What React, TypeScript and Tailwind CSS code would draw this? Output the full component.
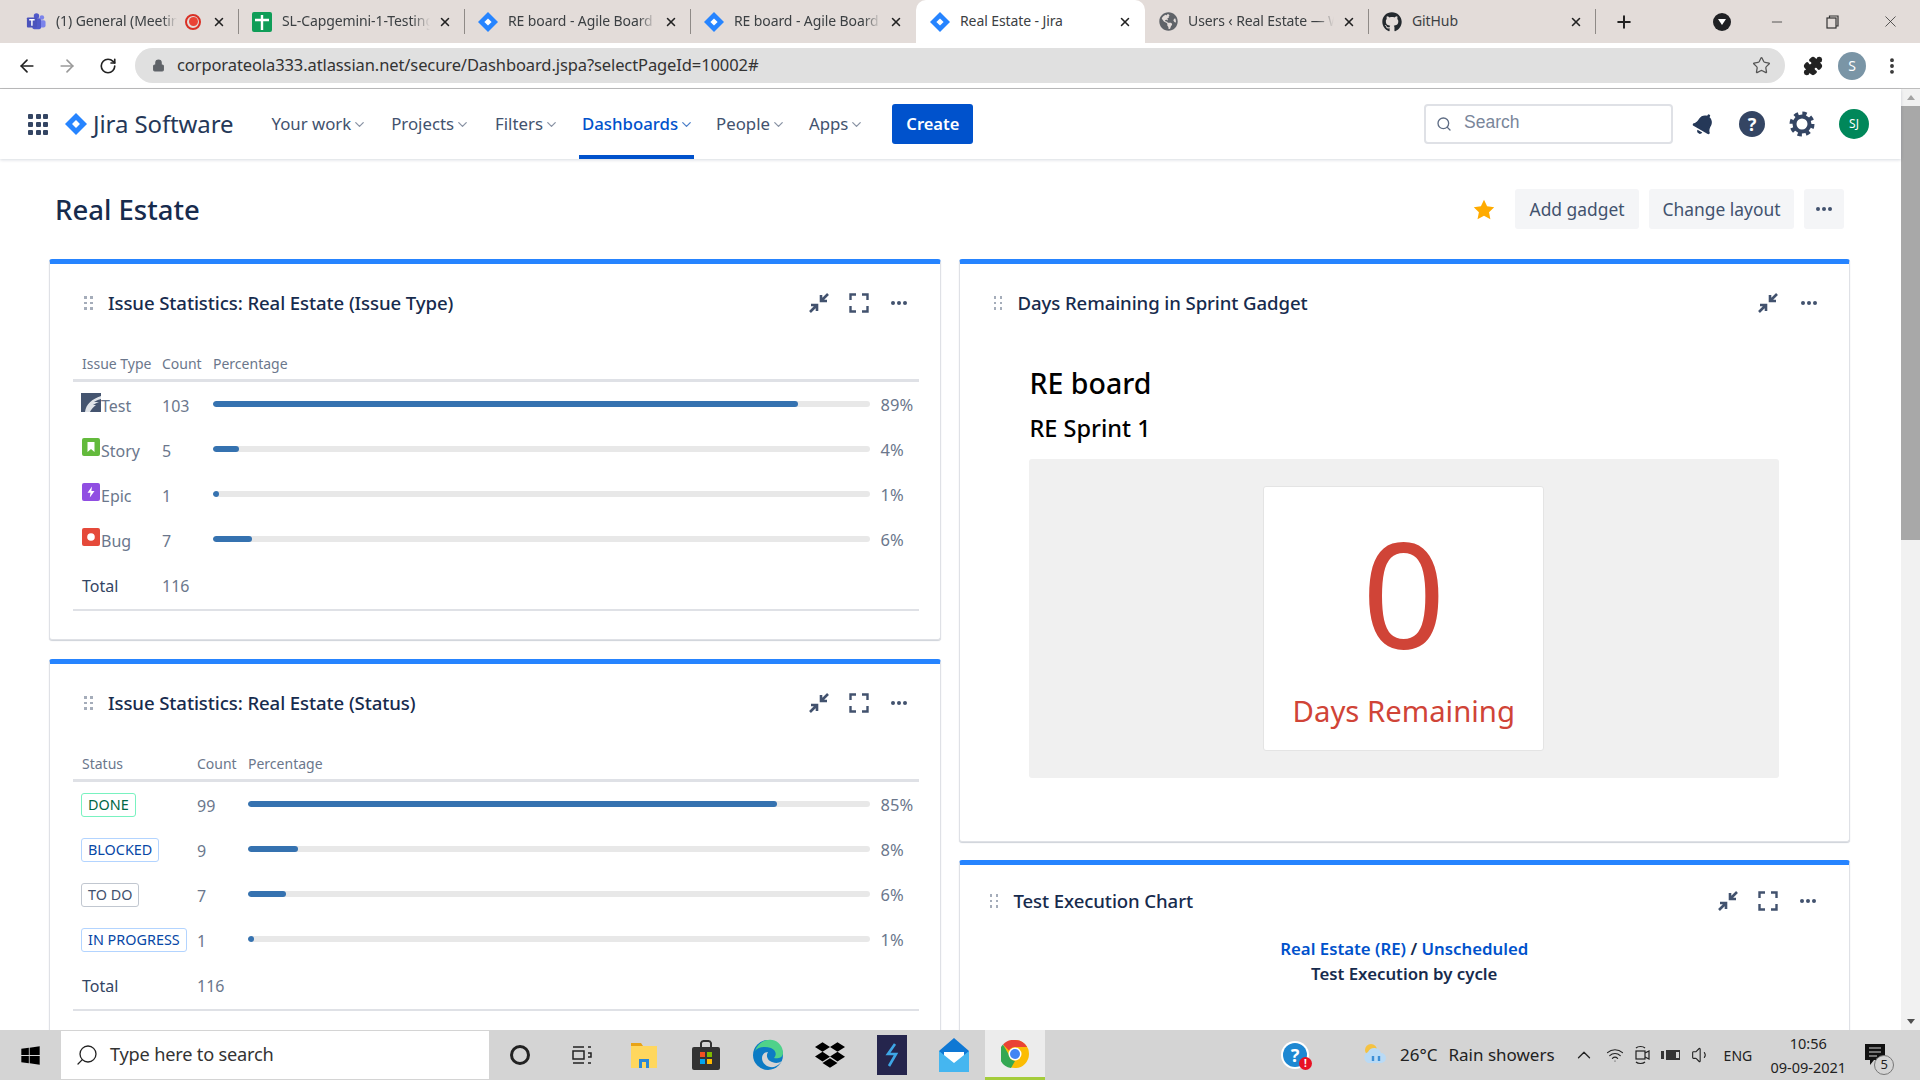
import { ArrowLeft, ArrowRight, RotateCw, Lock, Star, Puzzle, X, Plus, Minus, Search, ChevronDown, ChevronUp, Wifi, Volume1, MoreVertical } from 'lucide-react'
import { FaGithub, FaGlobeAmericas, FaBell, FaWindows, FaDropbox } from 'react-icons/fa'
import type { ReactNode } from 'react'

function JiraDiamond({ size = 20 }: { size?: number }) {
  return (
    <svg width={size} height={size} viewBox="0 0 20 20">
      <path d="M10 0 L20 10 L10 20 L0 10 Z" fill="#2684ff" />
      <path d="M10 6.4 L13.6 10 L10 13.6 L6.4 10 Z" fill="#fff" />
    </svg>
  )
}

function TeamsIcon() {
  return (
    <svg width="22" height="20" viewBox="0 0 22 20">
      <circle cx="17.5" cy="5" r="2.5" fill="#7b83eb" />
      <rect x="13" y="8" width="8.5" height="8" rx="2" fill="#7b83eb" />
      <circle cx="11.5" cy="3.5" r="3" fill="#5059c9" />
      <rect x="7" y="6" width="9.5" height="12" rx="2" fill="#5059c9" />
      <rect x="1" y="5" width="11" height="11" rx="1" fill="#4b53bc" />
      <path d="M3.5 7.5h6M6.5 7.5v6.5" stroke="#fff" strokeWidth="1.6" />
    </svg>
  )
}

function SheetsIcon() {
  return (
    <svg width="20" height="20" viewBox="0 0 20 20">
      <rect width="20" height="20" rx="2" fill="#0f9d58" />
      <path d="M3 8h14M10 3v15" stroke="#fff" strokeWidth="2.4" />
    </svg>
  )
}

function CloseX() {
  return <X size={14} strokeWidth={2.6} className="text-[#222] shrink-0" />
}

const TABS: { title: string; icon: ReactNode; width: string; extra?: ReactNode; active?: boolean; fade?: boolean }[] = [
  { title: '(1) General (Meeting)', fade: true, icon: <TeamsIcon />, width: 'w-[226px]', extra: <span className="w-[16px] h-[16px] rounded-full border-2 border-[#d93025] flex items-center justify-center mr-[11px] shrink-0"><span className="w-[9px] h-[9px] rounded-full bg-[#ea4335]" /></span> },
  { title: 'SL-Capgemini-1-Testing', fade: true, icon: <SheetsIcon />, width: 'w-[226px]' },
  { title: 'RE board - Agile Board', fade: true, icon: <JiraDiamond />, width: 'w-[226px]' },
  { title: 'RE board - Agile Board', fade: true, icon: <JiraDiamond />, width: 'w-[225px]' },
  { title: 'Real Estate - Jira', icon: <JiraDiamond />, width: 'w-[229px]', active: true },
  { title: 'Users ‹ Real Estate — WordPress', fade: true, icon: <FaGlobeAmericas size={19} className="text-[#5f6368]" />, width: 'w-[224px]' },
  { title: 'GitHub', icon: <FaGithub size={20} className="text-[#24292e]" />, width: 'w-[227px]' },
]

function ChromeTabs() {
  return (
    <div className="h-[43px] bg-[#e3dcd9] flex items-end pl-[13px] shrink-0">
      {TABS.map((t, i) =>
        <div
          key={i}
          className={t.active
            ? `${t.width} h-[43px] bg-white rounded-t-[10px] flex items-center pl-[14px] pr-[13px] shrink-0`
            : `${t.width} h-[43px] flex items-center pl-[13px] pr-[13px] shrink-0 relative`}
        >
          <span className="w-[20px] flex justify-center shrink-0">{t.icon}</span>
          <span className={t.fade
            ? 'flex-1 ml-[10px] mr-[8px] -mt-[2px] overflow-hidden whitespace-nowrap text-[14px] text-[#3c4043] tracking-[-0.1px] [mask-image:linear-gradient(to_right,black_88%,transparent)]'
            : 'flex-1 ml-[10px] mr-[8px] -mt-[2px] overflow-hidden whitespace-nowrap text-[14px] text-[#3c4043] tracking-[-0.1px]'}>{t.title}</span>
          {t.extra}
          <CloseX />
          {!t.active && i !== 3 && <span className="absolute right-0 top-[9px] h-[25px] w-px bg-[#8f8a87]" />}
        </div>
      )}
      <div className="h-[43px] flex items-center ml-[18px]">
        <Plus size={20} strokeWidth={2.4} className="text-[#222]" />
      </div>
      <div className="h-[43px] flex items-center ml-[79px]">
        <span className="w-[18px] h-[18px] rounded-full bg-[#202124] flex items-center justify-center">
          <span className="w-0 h-0 border-l-[4px] border-r-[4px] border-t-[6px] border-l-transparent border-r-transparent border-t-white" />
        </span>
      </div>
      <div className="h-[43px] flex items-center ml-[38px] text-[#333]">
        <Minus size={16} strokeWidth={1.2} />
        <svg width="13" height="14" viewBox="0 0 13 14" className="ml-[41px]" fill="none" stroke="#333" strokeWidth="1.2">
          <rect x="1" y="3" width="9" height="10" />
          <path d="M3.5 3V1h8.5v10h-2" />
        </svg>
        <X size={19} strokeWidth={1} className="ml-[42px]" />
      </div>
    </div>
  )
}

function AddressBar() {
  return (
    <div className="h-[46px] bg-white border-b border-[#bdbdbd] flex items-center shrink-0">
      <ArrowLeft size={20} strokeWidth={2} className="ml-[17px] text-[#222]" />
      <ArrowRight size={20} strokeWidth={2} className="ml-[20px] text-[#9a9a9a]" />
      <RotateCw size={18} strokeWidth={2.2} className="ml-[22px] text-[#222]" />
      <div className="ml-[18px] w-[1650px] h-[35px] rounded-full bg-[#e0e0e0] flex items-center pl-[17px] pr-[14px] -mt-px">
        <Lock size={13} fill="#5f6368" className="text-[#5f6368]" />
        <span className="ml-[12px] text-[16.5px] text-[#333] tracking-[-0.1px] flex-1">corporateola333.atlassian.net/secure/Dashboard.jspa?selectPageId=10002#</span>
        <Star size={19} strokeWidth={1.6} className="text-[#555]" />
      </div>
      <Puzzle size={20} fill="#222" className="ml-[18px] text-[#222]" />
      <span className="ml-[15px] w-[28px] h-[28px] rounded-full bg-[#7a95a6] text-white text-[14px] flex items-center justify-center">S</span>
      <MoreVertical size={20} strokeWidth={2.6} className="ml-[16px] text-[#333]" />
    </div>
  )
}

const NAV_ITEMS = [
  { label: 'Your work', ml: 'ml-[38px]' },
  { label: 'Projects', ml: 'ml-[24px]' },
  { label: 'Filters', ml: 'ml-[25px]' },
  { label: 'Dashboards', ml: 'ml-[23px]', active: true },
  { label: 'People', ml: 'ml-[22px]' },
  { label: 'Apps', ml: 'ml-[23px]' },
]

function JiraNav() {
  return (
    <nav className="h-[70px] bg-white shadow-[0_1px_3px_rgba(9,30,66,0.16)] flex items-center pl-[28px] pr-[32px] relative shrink-0">
      <div className="grid grid-cols-3 gap-[3px] w-[20px]">
        {Array.from({ length: 9 }).map((_, i) => <span key={i} className="w-[5px] h-[5px] bg-[#344563] rounded-[1px]" />)}
      </div>
      <span className="ml-[17px]"><JiraDiamond size={22} /></span>
      <span className="ml-[6px] text-[24px] text-[#253858] tracking-[-0.1px]">Jira Software</span>
      {NAV_ITEMS.map(n =>
        <div key={n.label} className={`${n.ml} h-[70px] flex items-center relative`}>
          <span className={n.active ? 'text-[16.8px] font-medium text-[#0052cc]' : 'text-[16.8px] text-[#42526e]'}>{n.label}</span>
          <ChevronDown size={15} strokeWidth={2} className={n.active ? 'text-[#4c7fc9] ml-[1px]' : 'text-[#8993a4] ml-[1px]'} />
          {n.active && <span className="absolute left-[-3px] right-0 bottom-0 h-[4px] bg-[#0052cc]" />}
        </div>
      )}
      <button className="ml-[28px] w-[81px] h-[40px] bg-[#0052cc] rounded-[3px] text-white text-[16.5px] font-semibold">Create</button>
      <div className="ml-auto w-[249px] h-[40px] border-2 border-[#dfe1e6] rounded-[4px] flex items-center pl-[10px]">
        <Search size={16} className="text-[#5e6c84]" />
        <span className="ml-[12px] text-[17.5px] text-[#7a869a] -mt-[3px] font-['Liberation_Sans',sans-serif]">Search</span>
      </div>
      <FaBell size={22} className="ml-[20px] text-[#253858] rotate-[30deg]" />
      <span className="ml-[24px] w-[26px] h-[26px] rounded-full bg-[#344563] text-white font-bold text-[18px] flex items-center justify-center">?</span>
      <svg width="26" height="26" viewBox="0 0 26 26" fill="none" stroke="#344563" className="ml-[24px]">
        <circle cx="13" cy="13" r="7.500" strokeWidth="4" />
        <circle cx="13" cy="13" r="10.500" strokeWidth="4" strokeDasharray="4.250 4" />
      </svg>
      <span className="ml-[24px] w-[30px] h-[30px] rounded-full bg-[#00875a] text-white text-[12px] flex items-center justify-center">SJ</span>
    </nav>
  )
}

function DragHandle() {
  return (
    <div className="grid grid-cols-2 gap-x-[4px] gap-y-[3px] w-[8px]">
      {Array.from({ length: 6 }).map((_, i) => <span key={i} className="w-[2.5px] h-[2.5px] bg-[#a5adba]" />)}
    </div>
  )
}

function Dots() {
  return (
    <svg width="18" height="6" viewBox="0 0 18 6" fill="#42526e">
      <circle cx="3" cy="3" r="2" /><circle cx="9" cy="3" r="2" /><circle cx="15" cy="3" r="2" />
    </svg>
  )
}

function CompressIcon() {
  return (
    <svg width="22" height="22" viewBox="0 0 22 22" fill="none" stroke="#42526e" strokeWidth="2.6">
      <path d="M20 2 L13.5 8.5 M13 3 V9 H19" />
      <path d="M2 20 L8.5 13.5 M3 13 H9 V19" />
    </svg>
  )
}

function ExpandIcon() {
  return (
    <svg width="20" height="20" viewBox="0 0 20 20" fill="none" stroke="#42526e" strokeWidth="2.4">
      <path d="M1.5 7V1.5H7M13 1.5H18.5V7M18.5 13V18.5H13M7 18.5H1.5V13" />
    </svg>
  )
}

function GadgetHeader({ title, expand = true, handleGap = 'ml-[34px]', top = 'pt-[27px]', dotsRight = 'mr-[32px]' }: { title: string; expand?: boolean; handleGap?: string; top?: string; dotsRight?: string }) {
  return (
    <div className={`flex items-center h-[24px] ${top} box-content`}>
      <span className={handleGap}><DragHandle /></span>
      <span className="ml-[16px] text-[18.6px] font-medium text-[#172b4d] tracking-[-0.1px]">{title}</span>
      <div className="ml-auto flex items-center">
        <CompressIcon />
        {expand && <span className="ml-[19px]"><ExpandIcon /></span>}
        <span className={`ml-[21px] ${dotsRight}`}><Dots /></span>
      </div>
    </div>
  )
}

type StatRow = { label: ReactNode; count: number; pct: number; fill: number }

function StatTable({ head, col1, rows }: { head: string; col1: string; rows: StatRow[] }) {
  return (
    <div className="mt-[34px] ml-[23px] mr-[21px]">
      <div className="h-[28px] flex items-center border-b-[3px] border-[#dfe1e6] box-content pb-[2px] pl-[9px] text-[14px] text-[#6b778c]">
        <span className={col1}>{head}</span>
        <span className="w-[51px]">Count</span>
        <span>Percentage</span>
      </div>
      {rows.map((r, i) =>
        <div key={i} className="h-[45px] flex items-center pl-[8px] pt-[2px] text-[16px] text-[#6b778c]">
          <span className={`${col1} flex items-center`}>{r.label}</span>
          <span className="w-[52px] pl-[1px]">{r.count}</span>
          <div className="flex-1 h-[6px] rounded-full bg-[#e8e8e8] overflow-hidden -mt-[4px]">
            <div className="h-full rounded-full bg-[#3572b0]" style={{ width: `${r.fill}px` }} />
          </div>
          <span className="w-[49px] pl-[11px] text-[16.5px]">{r.pct}%</span>
        </div>
      )}
      <div className="h-[44px] flex items-center pl-[9px] pt-[2px] text-[16px] border-b-2 border-[#dfe1e6] box-content pb-[1px]">
        <span className={`${col1} text-[#344563]`}>Total</span>
        <span className="text-[#6b778c]">116</span>
      </div>
    </div>
  )
}

function IssueIcon({ kind }: { kind: 'test' | 'story' | 'epic' | 'bug' }) {
  if (kind === 'test') {
    return (
      <svg width="20" height="19" viewBox="0 0 20 19" className="-mt-[7px] shrink-0">
        <rect width="20" height="19" fill="#44546f" />
        <path d="M4 19 C5 11 11 6 20 3 V6 C16 7 15 8 13 9 L18 9 C15 10 14 11 12 12 L15 12 C12 14 10 17 9 19 Z" fill="#dfe3e8" />
      </svg>
    )
  }
  const bg = kind === 'story' ? 'bg-[#63ba3c]' : kind === 'epic' ? 'bg-[#904ee2]' : 'bg-[#e5493a]'
  return (
    <span className={`w-[18px] h-[18px] rounded-[2px] ${bg} flex items-center justify-center -mt-[7px] ml-[1px] mr-[1px] shrink-0`}>
      <svg width="12" height="12" viewBox="0 0 12 12" fill="#fff">
        {kind === 'story' && <path d="M2.5 1h7v10L6 8 2.5 11z" />}
        {kind === 'epic' && <path d="M7 0.5 2.5 6.8H5.5L4.8 11.5 9.5 5H6.4z" />}
        {kind === 'bug' && <circle cx="6" cy="6" r="3.8" />}
      </svg>
    </span>
  )
}

const TYPE_ROWS: StatRow[] = [
  { label: <><IssueIcon kind="test" />Test</>, count: 103, pct: 89, fill: 585 },
  { label: <><IssueIcon kind="story" />Story</>, count: 5, pct: 4, fill: 26 },
  { label: <><IssueIcon kind="epic" />Epic</>, count: 1, pct: 1, fill: 6 },
  { label: <><IssueIcon kind="bug" />Bug</>, count: 7, pct: 6, fill: 39 },
]

function Lozenge({ text, tone }: { text: string; tone: string }) {
  return <span className={`h-[24px] px-[6px] rounded-[3px] border text-[14.4px] flex items-center -mt-[2px] whitespace-nowrap ${tone}`}>{text}</span>
}

const BLUE_TONE = 'border-[#b3d4ff] text-[#0747a6]'

const STATUS_ROWS: StatRow[] = [
  { label: <Lozenge text="DONE" tone="border-[#79f2c0] text-[#006644]" />, count: 99, pct: 85, fill: 529 },
  { label: <Lozenge text="BLOCKED" tone={BLUE_TONE} />, count: 9, pct: 8, fill: 50 },
  { label: <Lozenge text="TO DO" tone="border-[#c1c7d0] text-[#42526e]" />, count: 7, pct: 6, fill: 38 },
  { label: <Lozenge text="IN PROGRESS" tone={BLUE_TONE} />, count: 1, pct: 1, fill: 6 },
]

function Gadget({ className, children }: { className: string; children: ReactNode }) {
  return (
    <section className={`bg-white rounded-[3px] border border-[#dfe1e6] border-t-[5px] border-t-[#2684ff] shadow-[0_1px_1px_rgba(9,30,66,0.2)] overflow-hidden shrink-0 ${className}`}>
      {children}
    </section>
  )
}

function Dashboard() {
  return (
    <div className="flex-1 overflow-hidden flex flex-col">
      <div className="flex items-center h-[40px] mt-[30px] pl-[55px] pr-[57px] shrink-0">
        <h1 className="text-[27.5px] font-medium text-[#172b4d] mt-[2px]">Real Estate</h1>
        <svg width="22" height="21" viewBox="0 0 24 23" className="ml-auto" fill="#ffab00">
          <path d="M12 0.8 15.4 8l7.8 1-5.7 5.4 1.5 7.8L12 18.4 4.9 22.2l1.5-7.8L.8 9l7.8-1z" />
        </svg>
        <button className="ml-[20px] w-[124px] h-[40px] rounded-[3px] bg-[#f4f5f7] text-[17.4px] text-[#42526e]">Add gadget</button>
        <button className="ml-[10px] w-[145px] h-[40px] rounded-[3px] bg-[#f4f5f7] text-[17.4px] text-[#42526e]">Change layout</button>
        <button className="ml-[10px] w-[40px] h-[40px] rounded-[3px] bg-[#f4f5f7] flex items-center justify-center"><Dots /></button>
      </div>
      <div className="grid grid-cols-2 gap-[18px] pl-[49px] pr-[51px] mt-[30px] items-start">
        <div className="flex flex-col gap-[19px]">
          <Gadget className="h-[381px]">
            <GadgetHeader title="Issue Statistics: Real Estate (Issue Type)" />
            <StatTable head="Issue Type" col1="w-[80px]" rows={TYPE_ROWS} />
          </Gadget>
          <Gadget className="h-[382px]">
            <GadgetHeader title="Issue Statistics: Real Estate (Status)" />
            <StatTable head="Status" col1="w-[115px]" rows={STATUS_ROWS} />
          </Gadget>
        </div>
        <div className="flex flex-col gap-[18px]">
          <Gadget className="h-[583px]">
            <GadgetHeader title="Days Remaining in Sprint Gadget" expand={false} dotsRight="mr-[31px]" />
            <div className="ml-[69px] mr-[70px] mt-[48px]">
              <h2 className="text-[28.5px] font-medium text-black leading-[40px] pl-[1px]">RE board</h2>
              <h3 className="text-[23.5px] font-medium text-black leading-[32px] mt-[9px] pl-[1px]">RE Sprint 1</h3>
              <div className="mt-[15px] h-[319px] rounded-[3px] bg-[#f0f0f0] flex items-center justify-center">
                <div className="w-[281px] h-[265px] rounded-[3px] bg-white border border-[#e4e4e4] flex flex-col items-center">
                  <span className="text-[146px] leading-[180px] text-[#d04437] mt-[16px]">0</span>
                  <span className="text-[29.3px] leading-[40px] text-[#d04437] mt-[8px]">Days Remaining</span>
                </div>
              </div>
            </div>
          </Gadget>
          <Gadget className="h-[200px]">
            <GadgetHeader title="Test Execution Chart" handleGap="ml-[30px]" top="pt-[24px]" />
            <div className="mt-[23px] text-center text-[16.8px] font-semibold text-[#172b4d] leading-[25px]">
              <div><span className="text-[#0052cc]">Real Estate (RE)</span> / <span className="text-[#0052cc]">Unscheduled</span></div>
              <div>Test Execution by cycle</div>
            </div>
          </Gadget>
        </div>
      </div>
    </div>
  )
}

function ScrollBar() {
  return (
    <div className="w-[19px] bg-[#f1f1f1] flex flex-col items-center shrink-0">
      <div className="h-[17px] flex items-center justify-center">
        <span className="w-0 h-0 border-l-[4px] border-r-[4px] border-b-[5px] border-l-transparent border-r-transparent border-b-[#a3a3a3]" />
      </div>
      <div className="w-full h-[434px] bg-[#a8a8a8]" />
      <div className="flex-1" />
      <div className="h-[17px] flex items-center justify-center">
        <span className="w-0 h-0 border-l-[4px] border-r-[4px] border-t-[5px] border-l-transparent border-r-transparent border-t-[#505050]" />
      </div>
    </div>
  )
}

function TaskCell({ children, className = 'w-[62px]' }: { children: ReactNode; className?: string }) {
  return <div className={`h-[50px] flex items-center justify-center shrink-0 ${className}`}>{children}</div>
}

function Taskbar() {
  return (
    <footer className="h-[50px] bg-[#d4d4d4] flex items-center text-[#222] shrink-0">
      <TaskCell className="w-[61px]"><FaWindows size={21} className="text-black" /></TaskCell>
      <div className="w-[428px] h-[48px] bg-white flex items-center pl-[14px] shrink-0">
        <Search size={24} strokeWidth={1.3} className="-scale-x-100 text-[#222]" />
        <span className="ml-[11px] text-[18.2px] text-[#333] tracking-[-0.2px]">Type here to search</span>
      </div>
      <TaskCell className="w-[62px]"><span className="w-[20px] h-[20px] rounded-full border-[3px] border-[#222]" /></TaskCell>
      <TaskCell>
        <svg width="22" height="22" viewBox="0 0 22 22" fill="none" stroke="#222" strokeWidth="1.5">
          <rect x="2" y="7" width="11" height="8" /><path d="M2 3h11M2 19h11M17 3h3M17 9h3v4h-3M17 19h3" />
        </svg>
      </TaskCell>
      <TaskCell>
        <svg width="28" height="26" viewBox="0 0 28 26">
          <path d="M1 1h10l2 3H1z" fill="#e8a317" />
          <path d="M1 4h26v22H1z" fill="#ffd75e" />
          <path d="M9 26v-9h10v9h-3v-6h-4v6z" fill="#2b88d8" />
        </svg>
      </TaskCell>
      <TaskCell>
        <svg width="28" height="30" viewBox="0 0 28 30">
          <path d="M9 7V3a3 3 0 0 1 3-2h4a3 3 0 0 1 3 2v4" fill="none" stroke="#333" strokeWidth="2" />
          <rect y="7" width="28" height="23" rx="2" fill="#333" />
          <rect x="8" y="12" width="5" height="5" fill="#f25022" /><rect x="15" y="12" width="5" height="5" fill="#7fba00" />
          <rect x="8" y="19" width="5" height="5" fill="#00a4ef" /><rect x="15" y="19" width="5" height="5" fill="#ffb900" />
        </svg>
      </TaskCell>
      <TaskCell>
        <svg width="32" height="32" viewBox="0 0 32 32">
          <circle cx="16" cy="16" r="15" fill="#0c7bc4" />
          <path d="M3 12C6 3 14 0 20 1c7 1 11 7 11 13 0 5-6 6-9 5 3-3 2-8-3-10C13 7 6 8 3 12z" fill="#4fd28a" />
          <path d="M10 19c0 6 6 10 12 9 3-1 6-3 8-6-4 3-9 2-12 0-3-2-4-6-2-9-4 0-6 3-6 6z" fill="#d4d4d4" />
        </svg>
      </TaskCell>
      <TaskCell><FaDropbox size={30} className="text-black" /></TaskCell>
      <TaskCell>
        <div className="w-[30px] h-[40px] bg-[#25254d] flex items-center justify-center">
          <svg width="14" height="24" viewBox="0 0 14 24" fill="none" stroke="#3ea6e6" strokeWidth="2.6"><path d="M10 1 3 11h8L4 23" /></svg>
        </div>
      </TaskCell>
      <TaskCell>
        <svg width="30" height="34" viewBox="0 0 30 34">
          <path d="M15 0 30 13v21H0V13z" fill="#0f78d4" />
          <path d="M5 14h20v6l-10 7-10-7z" fill="#fff" />
          <path d="M0 13v21h30V13L15 25z" fill="#45b6f0" />
        </svg>
      </TaskCell>
      <div className="w-[60px] h-[50px] bg-[#ececec] border-b-[3px] border-[#a4cc3b] flex items-center justify-center shrink-0">
        <svg width="28" height="28" viewBox="0 0 28 28">
          <circle cx="14" cy="14" r="14" fill="#fbbc04" />
          <path d="M14 0a14 14 0 0 1 12.1 7H14a7 7 0 0 0-6.1 3.5L2 4.5A14 14 0 0 1 14 0z" fill="#ea4335" />
          <path d="M2 4.5l6 10.5a7 7 0 0 0 6 6L10 28A14 14 0 0 1 2 4.500z" fill="#34a853" />
          <circle cx="14" cy="14" r="6.500" fill="#fff" /><circle cx="14" cy="14" r="5" fill="#4285f4" />
        </svg>
      </div>
      <div className="ml-[236px] w-[28px] h-[28px] rounded-full bg-white flex items-center justify-center relative shrink-0">
        <span className="w-[24px] h-[24px] rounded-full bg-[#1e88d2] text-white font-bold text-[18px] flex items-center justify-center">?</span>
        <span className="absolute -right-[3px] -bottom-[1px] w-[13px] h-[13px] rounded-full bg-[#e81123] text-white text-[10px] font-bold flex items-center justify-center">!</span>
      </div>
      <svg width="26" height="24" viewBox="0 0 26 24" className="ml-[53px] shrink-0">
        <circle cx="9" cy="7" r="6" fill="#f5c242" />
        <path d="M6 20a6 6 0 0 1 0-11 7 7 0 0 1 13 1 5 5 0 0 1 0 10z" fill="#b9daf5" />
        <path d="M11 13v5M17 13v5" stroke="#3d8fd6" strokeWidth="2.4" />
      </svg>
      <span className="ml-[12px] text-[17px] text-[#222] whitespace-nowrap">26°C</span>
      <span className="ml-[11px] text-[17px] text-[#222] whitespace-nowrap">Rain showers</span>
      <ChevronUp size={22} strokeWidth={1.4} className="ml-[18px] shrink-0" />
      <Wifi size={18} strokeWidth={1.5} className="ml-[11px] shrink-0" />
      <svg width="16" height="22" viewBox="0 0 16 22" className="ml-[10px] shrink-0" fill="none" stroke="#222" strokeWidth="1.2">
        <rect x="2" y="7" width="9" height="8" /><path d="M11 9l4-2v8l-4-2M2 4c2-2 7-2 9 0M2 18c2 2 7 2 9 0" />
      </svg>
      <svg width="20" height="12" viewBox="0 0 20 12" className="ml-[11px] shrink-0" fill="#222">
        <path d="M0 2h3v8H0zM5 1h14v10H5z" fillOpacity="0.9" /><rect x="15" y="3" width="3" height="6" fill="#d4d4d4" />
      </svg>
      <Volume1 size={20} strokeWidth={1.3} className="ml-[10px] shrink-0" />
      <span className="ml-[13px] text-[14px] text-[#222]">ENG</span>
      <div className="ml-[20px] w-[72px] flex flex-col items-center text-[14.5px] leading-[24px] text-[#222] whitespace-nowrap">
        <span>10:56</span>
        <span>09-09-2021</span>
      </div>
      <div className="ml-[21px] relative shrink-0">
        <svg width="20" height="22" viewBox="0 0 20 22"><path d="M0 0h20v16H9l-4 5v-5H0z" fill="#111" /><path d="M4 4h12M4 8h12M4 12h8" stroke="#d4d4d4" strokeWidth="1.2" /></svg>
        <span className="absolute left-[9px] top-[11px] w-[20px] h-[20px] rounded-full bg-[#d4d4d4] border border-[#777] text-[13px] text-[#222] flex items-center justify-center">5</span>
      </div>
    </footer>
  )
}

export default function App() {
  return (
    <div className="w-[1920px] h-[1080px] overflow-hidden flex flex-col bg-white font-['Noto_Sans',sans-serif]">
      <ChromeTabs />
      <AddressBar />
      <div className="flex-1 flex min-h-0">
        <div className="flex-1 flex flex-col min-w-0">
          <JiraNav />
          <Dashboard />
        </div>
        <ScrollBar />
      </div>
      <Taskbar />
    </div>
  )
}
